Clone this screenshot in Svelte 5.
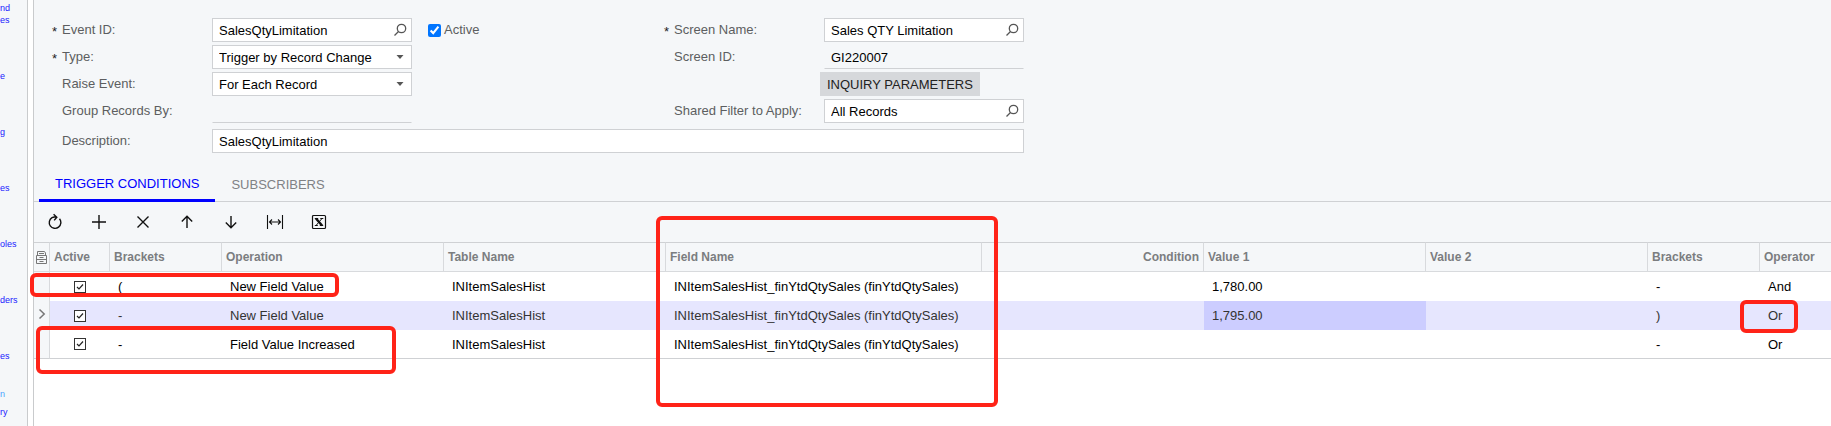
<script>
  const links = ['nd', 'es', 'e', 'g', 'es', 'oles', 'ders', 'es', 'n', 'ry'];
  const columns = ['', 'Active', 'Brackets', 'Operation', 'Table Name', 'Field Name', 'Condition', 'Value 1', 'Value 2', 'Brackets', 'Operator'];
  const field = 'INItemSalesHist_finYtdQtySales (finYtdQtySales)';
  const rows = [
    { open: '(', operation: 'New Field Value', value: '1,780.00', close: '-', operator: 'And' },
    { open: '-', operation: 'New Field Value', value: '1,795.00', close: ')', operator: 'Or', current: true },
    { open: '-', operation: 'Field Value Increased', value: '', close: '-', operator: 'Or' }
  ];
  const tools = ['Refresh', 'Add Row', 'Delete Row', 'Move Up', 'Move Down', 'Fit to Screen', 'Export to Excel'];
</script>

{#snippet search()}
  <button type="button" class="lookup" aria-label="Search">
    <svg width="14" height="14" viewBox="0 0 14 14" fill="none" stroke="#555" stroke-width="1.3"><circle cx="8.5" cy="5.5" r="4.2" /><path d="M5.5 8.5 1.5 12.5" /></svg>
  </button>
{/snippet}

{#snippet lookup(id, value)}
  <div class="box"><input type="text" {id} {value} />{@render search()}</div>
{/snippet}

{#snippet dropdown(id, value)}
  <div class="box">
    <select {id}><option>{value}</option></select>
    <svg class="arrow" width="8" height="4" viewBox="0 0 8 4"><path d="M.5 0h7L4 4Z" fill="#555" /></svg>
  </div>
{/snippet}

{#snippet icon(name)}
  <svg width="18" height="18" viewBox="0 0 18 18" fill="none" stroke="#111" stroke-width="1.4">
    {#if name === 'Refresh'}
      <path d="M13.5 5.8A5.8 5.8 0 1 1 6 4.6Q8 3.6 10.3 4.2M7.6 1.2 10.8 4.2 8.2 7.4" />
    {:else if name === 'Add Row'}
      <path d="M2 9h14M9 2v14" />
    {:else if name === 'Delete Row'}
      <path d="m3.5 3.5 11 11m0-11-11 11" />
    {:else if name === 'Move Up'}
      <path d="M9 15V3.5M3.8 8.5 9 3.3l5.2 5.2" />
    {:else if name === 'Move Down'}
      <path d="M9 3v11.5M3.8 9.5 9 14.7l5.2-5.2" />
    {:else if name === 'Fit to Screen'}
      <path d="M1.5 2v14M16.5 2v14M3.5 9h11M6 6.5 3.5 9 6 11.5M12 6.5 14.5 9 12 11.5" stroke-width="1.1" />
    {:else}
      <rect x="2.5" y="2.5" width="13" height="13" rx="1" stroke-width="1.2" />
      <path d="M6 5.5 12 12.5" stroke-width="2.4" /><path d="M12 5.5 6 12.5M4.8 5.5h3.4M10.3 5.5h3M4.8 12.5h3M9.8 12.5h3.4" stroke-width="1" />
    {/if}
  </svg>
{/snippet}

<div class="app">
  <nav class="side">
    {#each links as text, i}<a href="#{i}" class="l{i}">{text}</a>{/each}
  </nav>

  <main>
    <form class="form">
      <label class="req" for="event">Event ID:</label>
      {@render lookup('event', 'SalesQtyLimitation')}
      <label class="active"><input type="checkbox" checked />Active</label>
      <label class="req" for="screen">Screen Name:</label>
      {@render lookup('screen', 'Sales QTY Limitation')}

      <label class="req" for="type">Type:</label>
      {@render dropdown('type', 'Trigger by Record Change')}
      <label class="right" for="sid">Screen ID:</label>
      <div class="box plain"><input id="sid" type="text" value="GI220007" readonly /></div>

      <label for="raise">Raise Event:</label>
      {@render dropdown('raise', 'For Each Record')}
      <button type="button" class="params">INQUIRY PARAMETERS</button>

      <label for="group">Group Records By:</label>
      <div class="box plain"><input id="group" type="text" readonly /></div>
      <label class="right" for="filter">Shared Filter to Apply:</label>
      {@render lookup('filter', 'All Records')}

      <label class="desc" for="desc">Description:</label>
      <div class="box desc wide"><input id="desc" type="text" value="SalesQtyLimitation" /></div>
    </form>

    <div class="tabs">
      <button class="selected">TRIGGER CONDITIONS</button>
      <button>SUBSCRIBERS</button>
    </div>

    <div class="toolbar">
      {#each tools as name}<button aria-label={name}>{@render icon(name)}</button>{/each}
    </div>

    <div class="grid">
      <table>
        <colgroup>{#each columns as _, i}<col class="c{i}" />{/each}</colgroup>
        <thead>
          <tr>
            {#each columns as name, i}
              <th class:end={name === 'Condition'}>
                {#if i === 0}
                  <svg width="11" height="13" viewBox="0 0 11 13" fill="none" stroke="#777"><path d="M1.5 4V.5h7L9.500 2v2M.5 4.500h10v8H.5ZM.5 8.500h10M3 2.500h5M3.500 6.500h4M3.500 10.500h4" /></svg>
                {:else}{name}{/if}
              </th>
            {/each}
          </tr>
        </thead>
        <tbody>
          {#each rows as row}
            <tr class:current={row.current}>
              <td class="mark">{#if row.current}<svg width="8" height="12" viewBox="0 0 8 12" fill="none" stroke="#777" stroke-width="1.5"><path d="m1.5 1.5 4.7 4.5-4.7 4.5" /></svg>{/if}</td>
              <td class="tick"><input type="checkbox" checked aria-label="Active" /></td>
              <td>{row.open}</td>
              <td>{row.operation}</td>
              <td>INItemSalesHist</td>
              <td>{field}</td>
              <td></td>
              <td class="value">{row.value}</td>
              <td></td>
              <td>{row.close}</td>
              <td>{row.operator}</td>
            </tr>
          {/each}
        </tbody>
      </table>
      <span class="note first"></span>
      <span class="note third"></span>
      <span class="note field"></span>
      <span class="note operator"></span>
    </div>
  </main>
</div>

<style>
  :global(body) { margin: 0; background: #fff; }
  .app, .app :is(input, button, select) { font-family: "Liberation Sans", Arial, sans-serif; font-size: 13px; }
  .app { display: flex; min-height: 100vh; overflow: hidden; }
  .app * { box-sizing: border-box; }
  button { border: 0; padding: 0; background: none; }

  .side { flex: 0 0 28px; background: #f5f7f9; border-right: 1px solid #c9cbcd; display: flex; flex-direction: column; align-items: flex-start; overflow: hidden; }
  .side a { font-size: 9px; line-height: 12px; color: #1a1aff; text-decoration: none; margin-top: 44px; }
  .side .l0 { margin-top: 3px; line-height: 11px; }
  .side .l1 { margin-top: 0; }
  .side .l8 { margin-top: 26px; color: #4da3ff; }
  .side .l9 { margin-top: 6px; }

  main { flex: 1; min-width: 0; margin-left: 5px; border-left: 1px solid #c9cbcd; display: flex; flex-direction: column; }

  .form { background: #f5f7f9; display: grid; grid-template-columns: 150px 200px 262px 150px 200px; grid-auto-rows: 24px; row-gap: 3px; padding: 18px 0 17px 28px; align-items: center; color: #5c5e60; }
  .form > label { line-height: 24px; position: relative; align-self: start; }
  .req::before { content: "*"; position: absolute; left: -10px; top: 2px; color: #222; }
  .right { grid-column: 4; }
  .box { display: flex; align-items: center; height: 24px; background: #fff; border: 1px solid #cfd1d4; padding: 0 4px 0 6px; position: relative; }
  .box input, .box select { flex: 1; min-width: 0; width: 100%; height: 22px; border: 0; padding: 0; background: none; color: #000; outline: 0; appearance: none; }
  .box.plain { background: none; border-color: transparent transparent #cfd1d4; }
  .box.desc { grid-column: 2 / 6; }
  .desc { margin-top: 3px; }
  .form > .desc { align-self: start; }
  .arrow { position: absolute; right: 7px; top: 9px; }
  .lookup { display: flex; }
  .active { display: flex; align-items: center; gap: 3px; padding-left: 16px; }
  .active input { width: 13px; height: 13px; margin: 0; accent-color: #0075ff; }
  .params { grid-column: 5; justify-self: start; height: 24px; margin-left: -4px; padding: 0 7px; background: #d6d8db; color: #222; }

  .tabs { background: #f5f7f9; display: flex; height: 35px; padding-left: 5px; border-bottom: 1px solid #cfd1d4; }
  .tabs button { height: 35px; padding: 0 16px; color: #808285; }
  .tabs .selected { color: #00f; border-bottom: 3px solid #00f; }

  .toolbar { background: #f5f7f9; display: flex; align-items: center; gap: 26px; height: 40px; padding-left: 12px; }
  .toolbar button { display: flex; }

  .grid { position: relative; flex: 1; }
  table { table-layout: fixed; width: 100%; border-collapse: separate; border-spacing: 0; }
  .c0 { width: 16px; } .c1 { width: 60px; } .c2 { width: 112px; } .c3 { width: 222px; } .c4 { width: 222px; }
  .c5 { width: 316px; } .c6 { width: 222px; } .c7 { width: 222px; } .c8 { width: 222px; } .c9 { width: 112px; }
  th { height: 30px; padding: 0 4px; text-align: left; font-size: 12px; font-weight: 700; color: #7b7d80; background: #f5f7f9; border: solid #d8dadd; border-width: 1px 1px 1px 0; border-top-color: #cfd1d4; white-space: nowrap; }
  th:first-child { padding: 0 0 0 2px; }
  th:last-child { border-right: 0; }
  th svg { display: block; }
  .end { text-align: right; }
  td { height: 29px; padding: 0 8px; white-space: nowrap; color: #000; }
  tbody tr:last-child td { border-bottom: 1px solid #cfd1d4; }
  .mark { padding: 0 0 0 4px; background: #f5f7f9; border-right: 1px solid #d8dadd; }
  .current td { background: #e6e6fe; color: #333; }
  .current .mark { background: #f5f7f9; }
  .current .value { background: #cccdff; }
  .tick { padding: 0 0 0 24px; }
  .tick input { display: block; appearance: none; width: 12px; height: 12px; margin: 0; border: 1px solid #333; background: #fff; }
  .tick input:checked { background: #fff url("data:image/svg+xml,%3Csvg xmlns='http://www.w3.org/2000/svg' viewBox='0 0 10 10'%3E%3Cpath d='M2 5l2 2 4-4.5' fill='none' stroke='%23222' stroke-width='1.2'/%3E%3C/svg%3E"); }

  .note { position: absolute; border: 4px solid #ff2318; border-radius: 6px; pointer-events: none; }
  .first { left: -4px; top: 31px; width: 309px; height: 24px; }
  .third { left: 2px; top: 84px; width: 360px; height: 48px; }
  .field { left: 622px; top: -26px; width: 342px; height: 191px; }
  .operator { left: 1706px; top: 58px; width: 58px; height: 33px; }
</style>
